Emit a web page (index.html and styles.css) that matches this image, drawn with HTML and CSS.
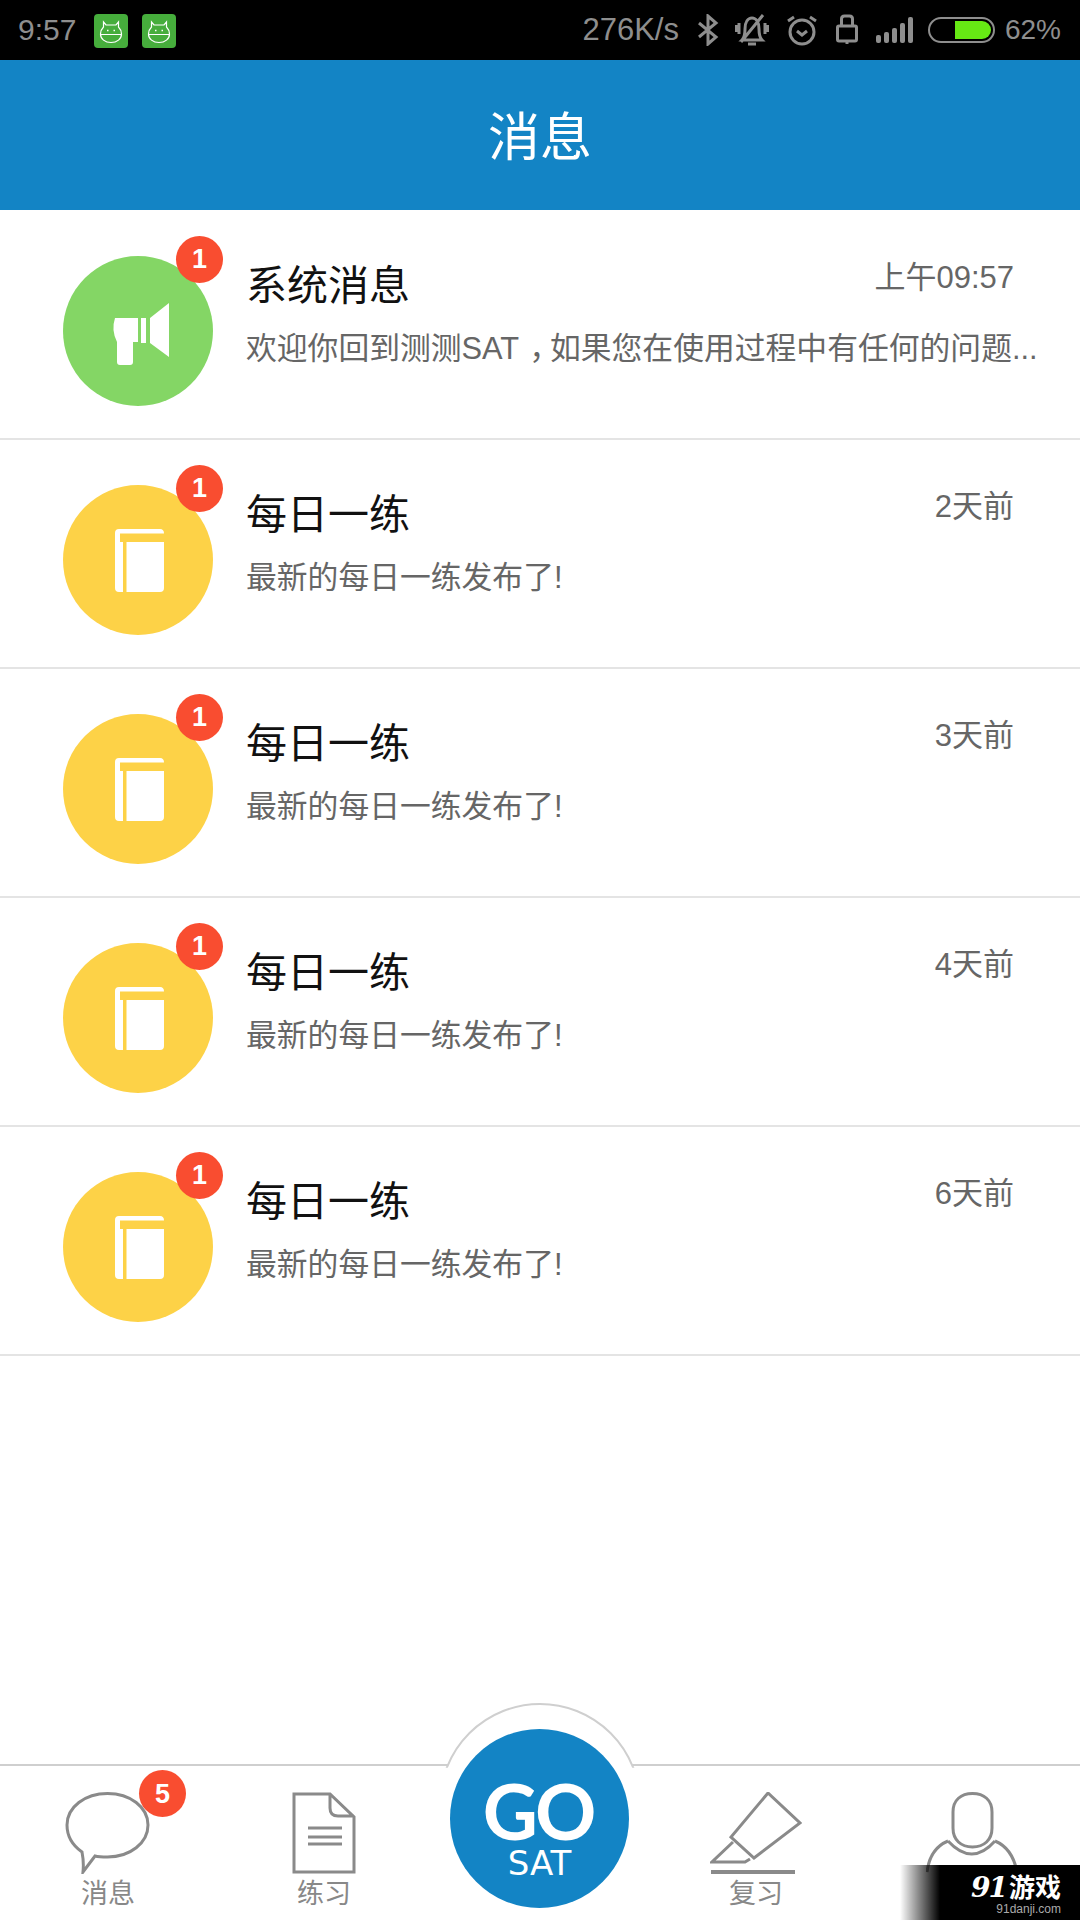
FILE: index.html
```html
<!DOCTYPE html>
<html lang="zh-CN">
  <head>
    <meta charset="UTF-8" />
    <title>消息</title>
    <link rel="stylesheet" href="styles.css">
  </head>
  <body>
    <svg class="defs" width="0" height="0">
      <symbol id="droid" viewBox="0 0 34 34">
        <rect width="34" height="34" rx="4" fill="#46ad3c" />
        <path d="M9.500 8l2.500 3h10l2.500-3v5q3 3 3 7c0 5-4.500 8.500-10.500 8.500s-10.500-3.500-10.500-8.500q0-4 3-7zM6.800 20.500h20.400" fill="none" stroke="#fff" stroke-width="1.200" />
        <path d="M13 16.500h1.500M19.500 16.500h1.500" stroke="#fff" stroke-width="1.500" />
      </symbol>
      <symbol id="book" viewBox="0 0 150 150">
        <path d="M56 44h41q4 0 4 4.500H57V57h44v46q0 4-4 4H63.500V57H60v50h-4q-4 0-4-4V48q0-4 4-4z" fill="#fff" />
      </symbol>
    </svg>

    <header class="status">
      <span class="clock">9:57</span>
      <svg class="app" width="34" height="34"><use href="#droid" /></svg>
      <svg class="app" width="34" height="34"><use href="#droid" /></svg>
      <span class="speed">276K/s</span>
      <svg class="st-ico bt" width="22" height="32" viewBox="0 0 22 32"><path d="M2 9l17 14-8 7V2l8 7L2 23" /></svg>
      <svg class="st-ico bell" width="34" height="32" viewBox="0 0 34 32"><path d="M7 26c3-3 3-7 3-11 0-7 3-11 7-11s7 4 7 11c0 4 0 8 3 11zM13 30h8M6 28L28 1M4 9v11M1 11v7M30 9v11M33 11v7" /></svg>
      <svg class="st-ico alarm" width="32" height="32" viewBox="0 0 32 32"><circle cx="16" cy="18" r="12" /><path d="M11 17l5 4 5-4M2 7l6-4M30 7l-6-4" /></svg>
      <svg class="st-ico lock" width="22" height="32" viewBox="0 0 22 32"><rect x="1.500" y="12" width="19" height="15" rx="1.500" /><path d="M5.500 12V5q0-3 3-3h5q3 0 3 3v7M11 27v3" /></svg>
      <span class="signal"><i></i><i></i><i></i><i></i><i></i></span>
      <span class="battery"><i></i></span>
      <span class="percent">62%</span>
    </header>

    <div class="title-bar">消息</div>

    <ul class="list">
      <li class="row">
        <div class="avatar green">
          <svg width="150" height="150" viewBox="0 0 150 150"><path d="M52 62h23v24h-5v20q0 3-3 3H57q-3 0-3-3V86q-6-12-2-24zM78 62h5v25h-5zM87 62l19-15v54L87 87z" fill="#fff" /></svg>
          <b class="badge">1</b>
        </div>
        <div class="body">
          <div class="head"><h2>系统消息</h2><time>上午09:57</time></div>
          <p>欢迎你回到测测SAT<span class="comma">，</span>如果您在使用过程中有任何的问题...</p>
        </div>
      </li>
      <li class="row">
        <div class="avatar yellow">
          <svg width="150" height="150"><use href="#book" /></svg>
          <b class="badge">1</b>
        </div>
        <div class="body">
          <div class="head"><h2>每日一练</h2><time>2天前</time></div>
          <p>最新的每日一练发布了!</p>
        </div>
      </li>
      <li class="row">
        <div class="avatar yellow">
          <svg width="150" height="150"><use href="#book" /></svg>
          <b class="badge">1</b>
        </div>
        <div class="body">
          <div class="head"><h2>每日一练</h2><time>3天前</time></div>
          <p>最新的每日一练发布了!</p>
        </div>
      </li>
      <li class="row">
        <div class="avatar yellow">
          <svg width="150" height="150"><use href="#book" /></svg>
          <b class="badge">1</b>
        </div>
        <div class="body">
          <div class="head"><h2>每日一练</h2><time>4天前</time></div>
          <p>最新的每日一练发布了!</p>
        </div>
      </li>
      <li class="row">
        <div class="avatar yellow">
          <svg width="150" height="150"><use href="#book" /></svg>
          <b class="badge">1</b>
        </div>
        <div class="body">
          <div class="head"><h2>每日一练</h2><time>6天前</time></div>
          <p>最新的每日一练发布了!</p>
        </div>
      </li>
    </ul>

    <nav class="tabs">
      <div class="tab">
        <svg width="90" height="82" viewBox="0 0 90 82"><path d="M19 60C9 53 4 43 4 33 4 15 22 1.500 44.500 1.500S85 15 85 33 67 65 44.500 65c-4.500 0-8.500 0-12.500-1L20 80q1-10-1-20z" /></svg>
        <span>消息</span>
        <b class="badge tab-badge">5</b>
      </div>
      <div class="tab">
        <svg width="64" height="82" viewBox="0 0 64 82"><path d="M2 2h36l24 23v55H2zM38 2v14q0 8 8 8h16M16 36h34M16 45h34M16 52h34" /></svg>
        <span>练习</span>
      </div>
      <div class="tab"></div>
      <div class="tab">
        <svg width="92" height="82" viewBox="0 0 92 82"><path d="M58 1l32 30-46 35-23-21zM23 50L2 70h33l5-3" /><path class="thick" d="M1 80h84" /></svg>
        <span>复习</span>
      </div>
      <div class="tab">
        <svg width="92" height="82" viewBox="0 0 92 82"><path d="M27 20C27 8 35 1.500 46.500 1.500S66 8 66 20v16c0 12-8 19-19.500 19S27 48 27 36zM22 49C10 54 3 64 1 80M69 49c12 5 19 15 22 31M22 49q24 26 47 0" /></svg>
      </div>
      <div class="hump"></div>
      <div class="go">
        <span class="go-word">GO</span>
        <span class="go-sat">SAT</span>
      </div>
    </nav>

    <div class="mark">
      <strong><em>91</em>游戏</strong>
      <small>91danji.com</small>
    </div>
  </body>
</html>
```

FILE: styles.css
```css
* {
  box-sizing: border-box;
}
body {
  margin: 0;
  width: 1080px;
  height: 1920px;
  display: flex;
  flex-direction: column;
  position: relative;
  overflow: hidden;
  background: #fff;
  font-family: "Liberation Sans", "Noto Sans CJK SC", sans-serif;
}
.defs {
  position: absolute;
}

/* status bar */
.status {
  height: 60px;
  flex: none;
  background: #000;
  color: #8e8e8e;
  display: flex;
  align-items: center;
  padding: 0 19px 0 18px;
  font-size: 30px;
}
.clock {
  width: 76px;
}
.app {
  margin-right: 14px;
  margin-top: 1px;
}
.speed {
  margin-left: auto;
  margin-right: 18px;
  font-size: 31px;
}
.percent {
  font-size: 28px;
}
.st-ico {
  fill: none;
  stroke: #8e8e8e;
  stroke-width: 3;
  margin-right: 18px;
  flex: none;
}
.bt {
  margin-right: 16px;
}
.bell {
  margin-right: 17px;
}
.signal {
  display: flex;
  align-items: flex-end;
  gap: 3px;
  height: 26px;
  margin-right: 15px;
  i {
    width: 5px;
    background: #8e8e8e;
    border-radius: 2px;
  }
  i:nth-child(1) { height: 8px; }
  i:nth-child(2) { height: 11px; }
  i:nth-child(3) { height: 15px; }
  i:nth-child(4) { height: 20px; }
  i:nth-child(5) { height: 26px; }
}
.battery {
  width: 67px;
  height: 26px;
  border: 2px solid #8e8e8e;
  border-radius: 13px;
  padding: 2px;
  display: flex;
  justify-content: flex-end;
  margin-right: 10px;
  i {
    width: 36px;
    background: #66e914;
    border-radius: 0 9px 9px 0;
  }
}

/* title */
.title-bar {
  height: 150px;
  flex: none;
  background: #1384c5;
  color: #fff;
  font-size: 52px;
  padding-bottom: 4px;
  display: flex;
  align-items: center;
  justify-content: center;
}

/* message list */
.list {
  flex: 1;
  list-style: none;
  margin: 0;
  padding: 1px 0 0;
}
.row {
  height: 229px;
  border-bottom: 2px solid #e4e4e4;
  display: flex;
  gap: 33px;
  padding: 45px 0 0 63px;
}
.avatar {
  width: 150px;
  height: 150px;
  border-radius: 50%;
  flex: none;
  position: relative;
  svg {
    display: block;
  }
  &.green {
    background: #84d665;
  }
  &.yellow {
    background: #fdd247;
  }
}
.badge {
  position: absolute;
  top: -20px;
  right: -10px;
  width: 47px;
  height: 47px;
  border-radius: 50%;
  background: #f94d30;
  color: #fff;
  font-size: 27px;
  display: flex;
  align-items: center;
  justify-content: center;
}
.body {
  flex: 1;
  min-width: 0;
  padding-right: 40px;
}
.head {
  display: flex;
  justify-content: space-between;
  padding-right: 26px;
  height: 62px;
  margin-top: 1px;
  h2 {
    margin: 0;
    font-size: 41px;
    font-weight: 400;
    line-height: 58px;
    color: #111;
  }
  time {
    font-size: 31px;
    line-height: 42px;
    color: #666;
  }
}
.body p {
  margin: 7px 0 0;
  font-size: 30.8px;
  line-height: 46px;
  color: #666;
  white-space: nowrap;
}
.comma {
  padding-left: 10px;
  letter-spacing: -10px;
}

/* bottom tabs */
.tabs {
  height: 156px;
  flex: none;
  border-top: 2px solid #cfcfcf;
  display: grid;
  grid-template-columns: repeat(5, 1fr);
  position: relative;
}
.tab {
  position: relative;
  display: flex;
  flex-direction: column;
  align-items: center;
  padding-top: 26px;
  color: #888;
  font-size: 27px;
  line-height: 40px;
  svg {
    display: block;
    fill: none;
    stroke: #8a8a8a;
    stroke-width: 3;
  }
  .thick {
    stroke-width: 4;
  }
}
.tab-badge {
  top: 4px;
  right: 30px;
}
.hump {
  position: absolute;
  top: -63px;
  left: 439px;
  width: 202px;
  height: 202px;
  border: 2px solid #cfcfcf;
  border-radius: 50%;
  background: #fff;
  clip-path: inset(0 0 68% 0);
}
.go {
  position: absolute;
  top: -37px;
  left: 450px;
  width: 179px;
  height: 179px;
  border-radius: 50%;
  background: #1384c5;
  color: #fff;
  display: flex;
  flex-direction: column;
  align-items: center;
  padding-top: 54px;
}
.go-word {
  font-family: Lato, sans-serif;
  font-weight: 700;
  font-size: 76px;
  line-height: 56px;
  letter-spacing: -3px;
  margin-left: -3px;
}
.go-sat {
  font-family: "DejaVu Sans", sans-serif;
  font-size: 34px;
  line-height: 30px;
  margin-top: 9px;
}

/* watermark */
.mark {
  position: absolute;
  right: 0;
  bottom: 0;
  width: 180px;
  height: 55px;
  background: linear-gradient(to right, rgba(0, 0, 0, 0), #000 40px);
  color: #fff;
  text-align: right;
  padding: 7px 19px 0 0;
  strong {
    display: block;
    font-family: "Noto Sans CJK SC", sans-serif;
    font-size: 26px;
    line-height: 28px;
    font-weight: 700;
  }
  em {
    font-family: "DejaVu Serif", serif;
    font-size: 28px;
    font-style: italic;
    letter-spacing: -2px;
    margin-right: 3px;
  }
  small {
    display: block;
    font-size: 12px;
    line-height: 14px;
    color: #aaa;
  }
}
```
